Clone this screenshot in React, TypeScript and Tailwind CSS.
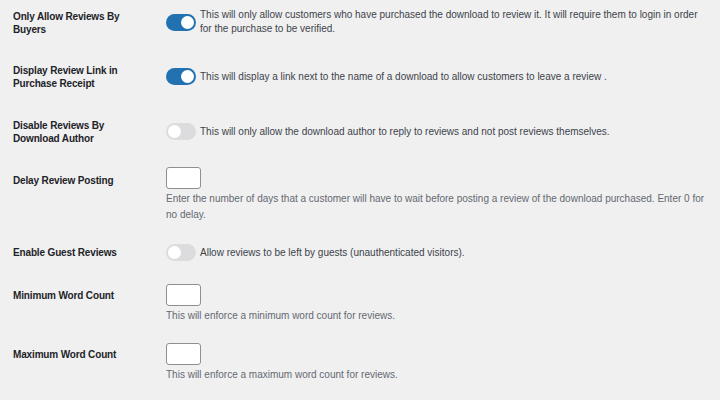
import React from "react";

function Toggle({ on }: { on: boolean }) {
  return (
    <span
      className={
        "shrink-0 w-[30px] h-[17px] rounded-full flex items-center px-[2px] " +
        (on ? "bg-[#2271b1] justify-end" : "bg-[#dcdcde] justify-start")
      }
    >
      <span className="w-[13px] h-[13px] rounded-full bg-white" />
    </span>
  );
}

function Input() {
  return <div className="w-[35px] h-[22px] bg-white border border-[#8c8f94] rounded-[3px]" />;
}

const label = "w-[166px] pl-[13px] text-[10px] leading-[13px] font-bold tracking-[-0.15px] text-[#1d2327]";

export default function App() {
  const font = { fontFamily: "'Liberation Sans', Arial, sans-serif" };
  return (
    <div className="w-[720px] h-[400px] bg-[#f0f0f1] overflow-hidden pt-[8px]" style={font}>
      {/* Row 1 */}
      <div className="flex">
        <div className={label + " pt-[2px]"}>
          Only Allow Reviews By
          <br />
          Buyers
        </div>
        <div className="flex items-center gap-[4px] w-[536px]">
          <Toggle on />
          <span className="text-[10px] leading-[14px] text-[#3c434a]">
            This will only allow customers who have purchased the download to review it. It will require them to login in order for the purchase to be verified.
          </span>
        </div>
      </div>
      {/* Row 2 */}
      <div className="flex mt-[28px]">
        <div className={label}>
          Display Review Link in
          <br />
          Purchase Receipt
        </div>
        <div className="flex items-center gap-[4px] pt-[4px] self-start">
          <Toggle on />
          <span className="text-[10px] leading-[14px] text-[#3c434a]">
            This will display a link next to the name of a download to allow customers to leave a review .
          </span>
        </div>
      </div>
      {/* Row 3 */}
      <div className="flex mt-[29px]">
        <div className={label}>
          Disable Reviews By
          <br />
          Download Author
        </div>
        <div className="flex items-center gap-[4px] pt-[4px] self-start">
          <Toggle on={false} />
          <span className="text-[10px] leading-[14px] text-[#3c434a]">
            This will only allow the download author to reply to reviews and not post reviews themselves.
          </span>
        </div>
      </div>
      {/* Row 4 */}
      <div className="flex mt-[22px]">
        <div className={label + " pt-[7px]"}>Delay Review Posting</div>
        <div className="flex flex-col w-[550px]">
          <Input />
          <p className="mt-[2px] text-[10px] leading-[16px] text-[#646970]">
            Enter the number of days that a customer will have to wait before posting a review of the download purchased. Enter 0 for no delay.
          </p>
        </div>
      </div>
      {/* Row 5 */}
      <div className="flex mt-[21px]">
        <div className={label + " pt-[2px]"}>Enable Guest Reviews</div>
        <div className="flex items-center gap-[4px] self-start">
          <Toggle on={false} />
          <span className="text-[10px] leading-[14px] text-[#3c434a]">
            Allow reviews to be left by guests (unauthenticated visitors).
          </span>
        </div>
      </div>
      {/* Row 6 */}
      <div className="flex mt-[23px]">
        <div className={label + " pt-[5px]"}>Minimum Word Count</div>
        <div className="flex flex-col">
          <Input />
          <p className="mt-[2px] text-[10px] leading-[16px] text-[#646970]">
            This will enforce a minimum word count for reviews.
          </p>
        </div>
      </div>
      {/* Row 7 */}
      <div className="flex mt-[19px]">
        <div className={label + " pt-[5px]"}>Maximum Word Count</div>
        <div className="flex flex-col">
          <Input />
          <p className="mt-[2px] text-[10px] leading-[16px] text-[#646970]">
            This will enforce a maximum word count for reviews.
          </p>
        </div>
      </div>
    </div>
  );
}
